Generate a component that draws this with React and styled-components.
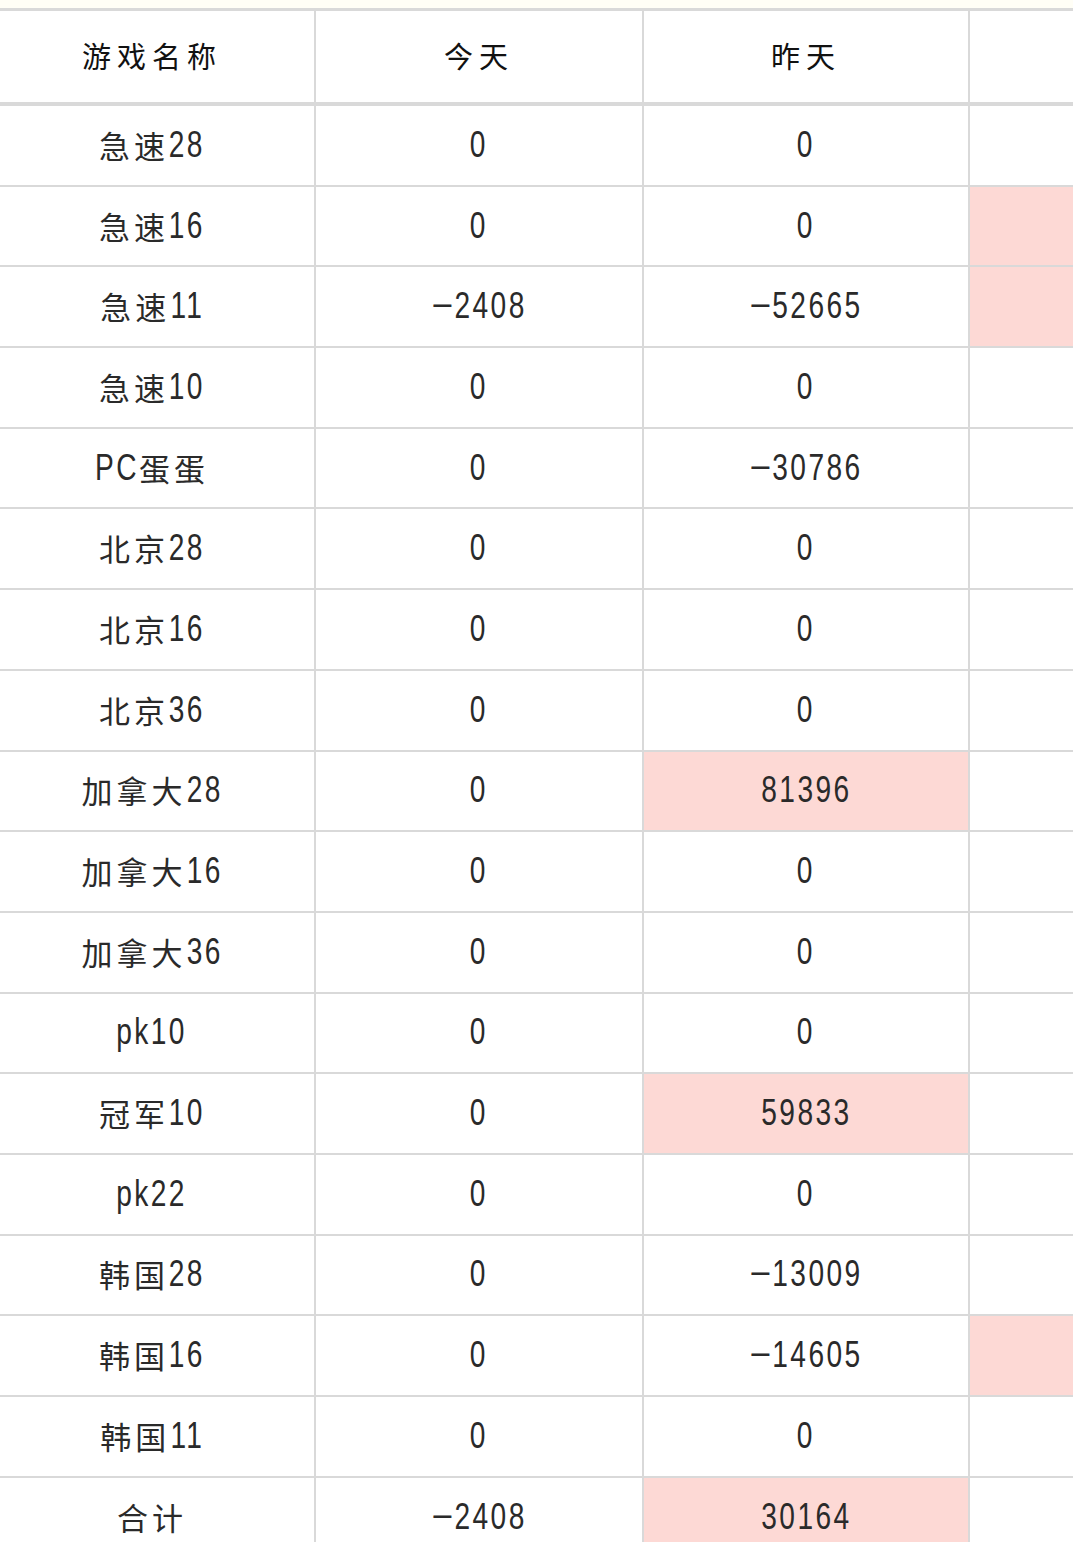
import React from "react";
import styled, { createGlobalStyle } from "styled-components";

const Global = createGlobalStyle`
  html, body { margin: 0; padding: 0; background: #fffef6; }
  body { overflow: hidden; }
  #root { width: 1073px; }
`;

const Page = styled.div`
  padding-top: 8px;
  width: 1073px;
  overflow: hidden;
`;

const Table = styled.div`
  width: 1200px;
  background: #ffffff;
  border-top: 3px solid #d9d9d9;
`;

const Row = styled.div`
  display: grid;
  grid-template-columns: 316px 328px 326px 230px;
  height: ${(p) => (p.$head ? "95px" : "80.7px")};
  box-sizing: border-box;
  border-bottom: ${(p) => (p.$head ? "4px" : "2px")} solid #d9d9d9;
`;

const Cell = styled.div`
  display: flex;
  align-items: center;
  justify-content: center;
  box-sizing: border-box;
  border-right: 2px solid #d9d9d9;
  padding-right: ${(p) => (p.$first ? "10px" : "0")};
  padding-bottom: 2px;
  background: ${(p) => (p.$hl ? "#fdd9d5" : "#ffffff")};
  color: ${(p) => (p.$head ? "#111" : "#2a2a2a")};
  white-space: nowrap;
  &:last-child { border-right: none; }
`;

const Han = styled.span`
  font-family: "Noto Sans CJK SC", "Noto Sans CJK JP", sans-serif;
  font-size: ${(p) => (p.$head ? "29px" : "31px")};
  letter-spacing: ${(p) => (p.$head ? "6px" : "4px")};
  line-height: 1;
  font-weight: 400;
`;

const SCALE = 0.76;
const NUM_SIZE = 37;
const NUM_LS = 3.2;

const Num = styled.span`
  display: inline-block;
  font-family: "Liberation Sans", Arial, sans-serif;
  font-size: ${NUM_SIZE}px;
  letter-spacing: ${NUM_LS}px;
  line-height: 1;
  font-weight: 400;
  transform: scaleX(${SCALE});
  transform-origin: center;
  margin: 0 ${(p) => -p.$w * (1 - SCALE) / 2}px;
`;

const Dash = styled.span`
  display: inline-block;
  font-family: "Liberation Sans", Arial, sans-serif;
  font-size: ${NUM_SIZE}px;
  line-height: 1;
  margin-right: 1px;
`;

const ADV = { P: 0.667, C: 0.722, p: 0.556, k: 0.5 };
const widthOf = (s) =>
  [...s].reduce((a, c) => a + (ADV[c] ?? 0.556) * NUM_SIZE + NUM_LS, 0);

function Label({ text, head }) {
  const parts = text.split(/([\u4e00-\u9fff]+|\u2212)/).filter(Boolean);
  return (
    <>
      {parts.map((p, i) => {
        if (/[\u4e00-\u9fff]/.test(p)) return <Han key={i} $head={head}>{p}</Han>;
        if (p === "\u2212") return <Dash key={i}>{p}</Dash>;
        return <Num key={i} $w={widthOf(p)}>{p}</Num>;
      })}
    </>
  );
}

const rows = [
  ["急速28", "0", "0", false, false],
  ["急速16", "0", "0", false, true],
  ["急速11", "\u22122408", "\u221252665", false, true],
  ["急速10", "0", "0", false, false],
  ["PC蛋蛋", "0", "\u221230786", false, false],
  ["北京28", "0", "0", false, false],
  ["北京16", "0", "0", false, false],
  ["北京36", "0", "0", false, false],
  ["加拿大28", "0", "81396", true, false],
  ["加拿大16", "0", "0", false, false],
  ["加拿大36", "0", "0", false, false],
  ["pk10", "0", "0", false, false],
  ["冠军10", "0", "59833", true, false],
  ["pk22", "0", "0", false, false],
  ["韩国28", "0", "\u221213009", false, false],
  ["韩国16", "0", "\u221214605", false, true],
  ["韩国11", "0", "0", false, false],
  ["合计", "\u22122408", "30164", true, false],
];

export default function App() {
  return (
    <>
      <Global />
      <Page>
        <Table>
          <Row $head>
            <Cell $head $first><Label head text="游戏名称" /></Cell>
            <Cell $head><Label head text="今天" /></Cell>
            <Cell $head><Label head text="昨天" /></Cell>
            <Cell $head />
          </Row>
          {rows.map(([name, today, yest, hl3, hl4]) => (
            <Row key={name}>
              <Cell $first><Label text={name} /></Cell>
              <Cell><Label text={today} /></Cell>
              <Cell $hl={hl3}><Label text={yest} /></Cell>
              <Cell $hl={hl4} />
            </Row>
          ))}
        </Table>
      </Page>
    </>
  );
}
